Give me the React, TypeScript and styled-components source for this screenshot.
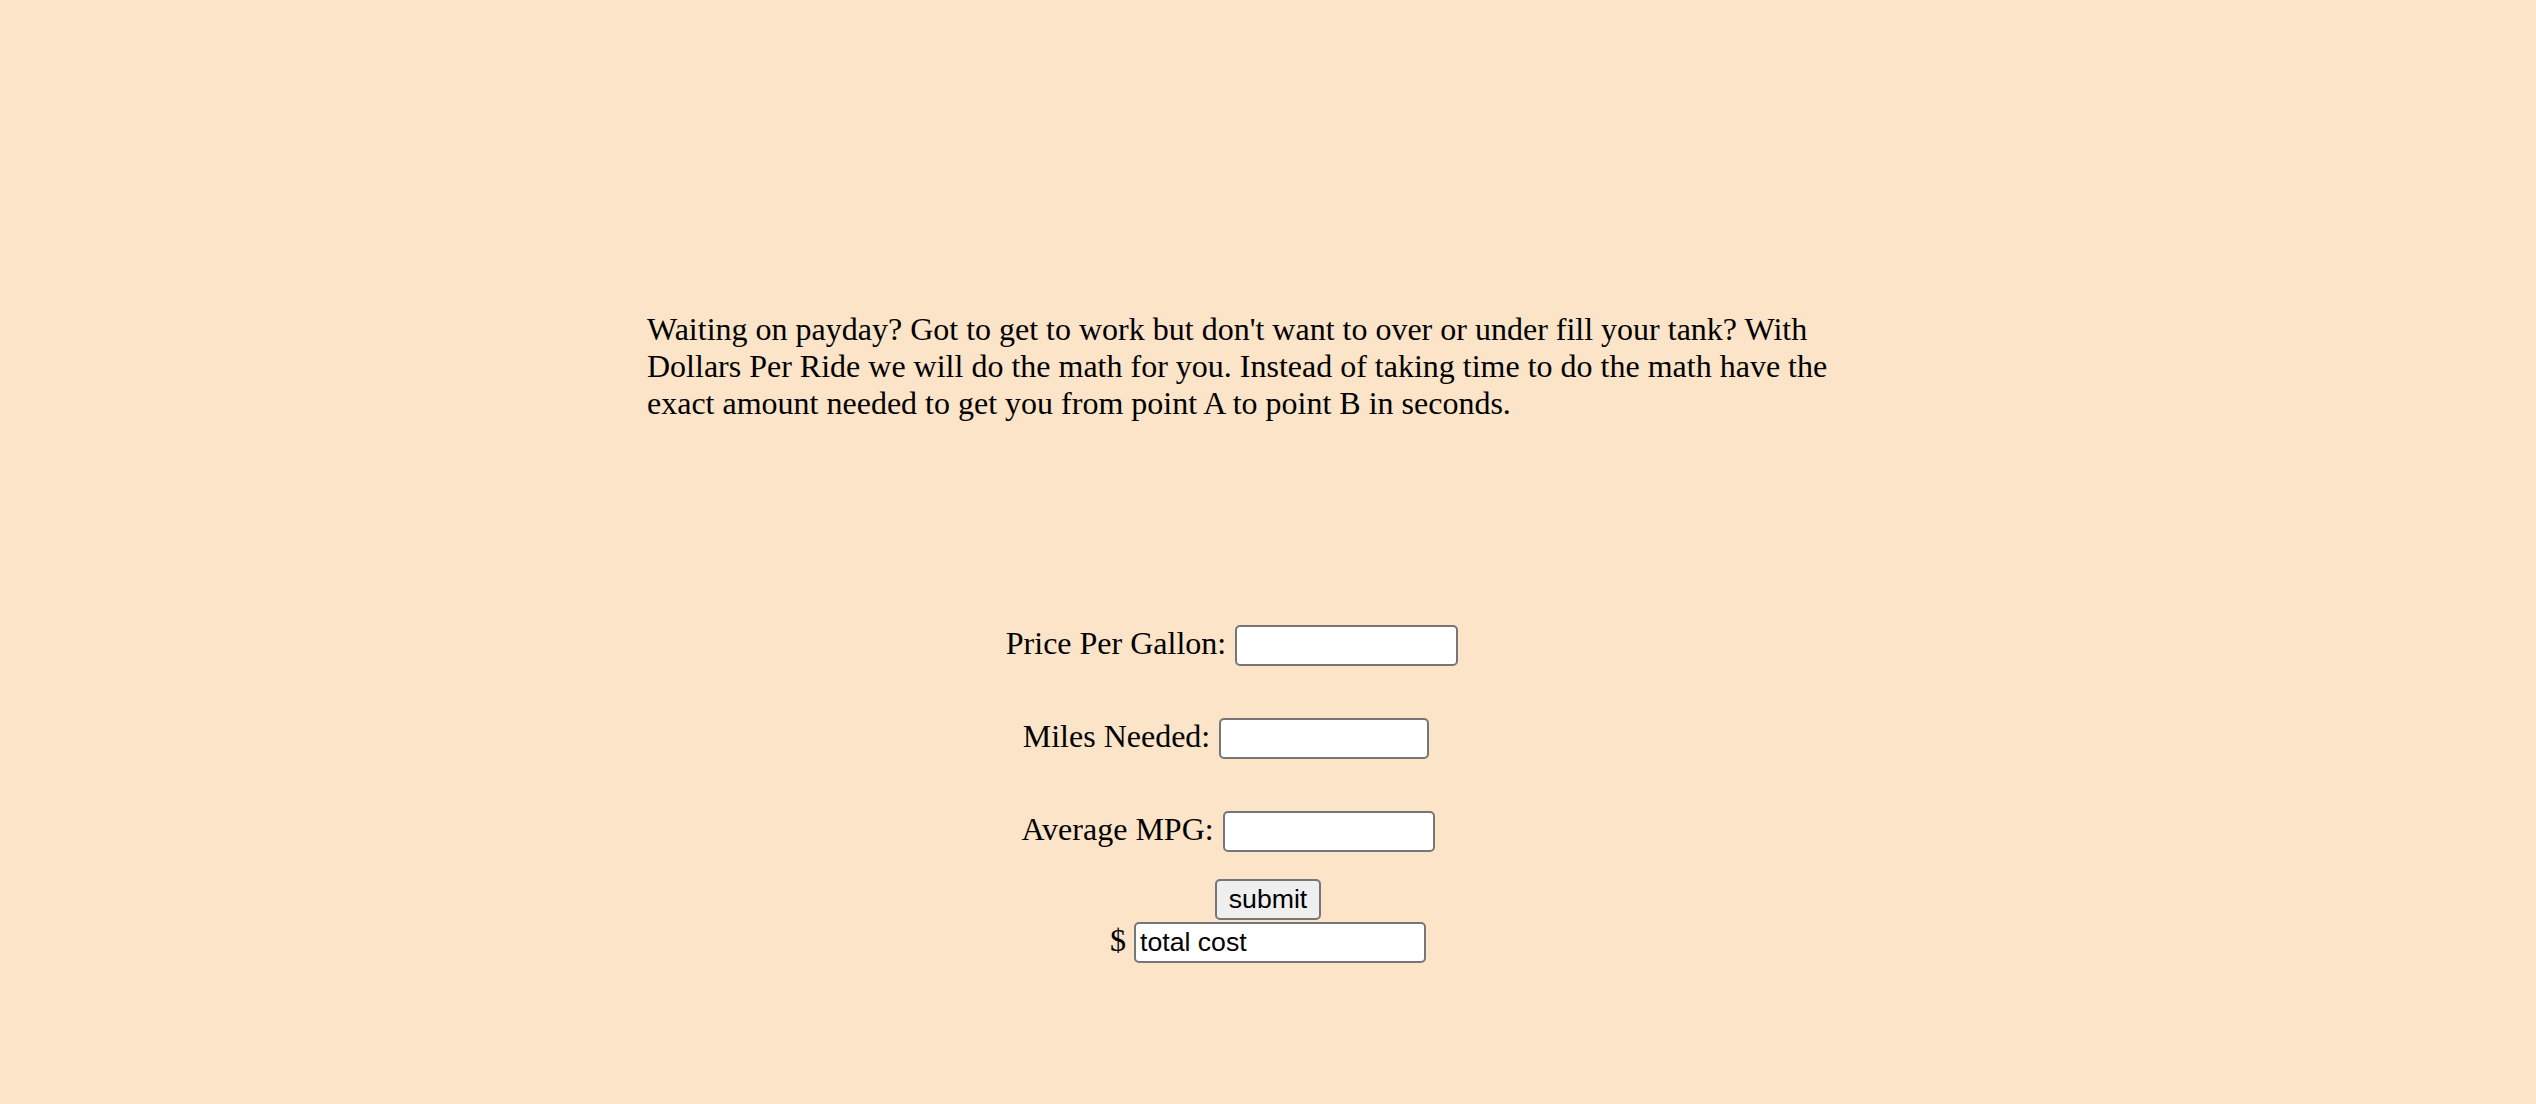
import React from "react";
import styled, { createGlobalStyle } from "styled-components";

const Global = createGlobalStyle`
  html, body {
    margin: 0;
    padding: 0;
    background: #fbe4c8;
  }
  body {
    font-family: "Liberation Serif", "Times New Roman", serif;
    font-size: 32px;
    color: #000;
  }
`;

const Page = styled.main`
  display: flex;
  flex-direction: column;
  padding: 311px 16px 0;
  min-height: 1104px;
  box-sizing: border-box;
`;

const Intro = styled.p`
  width: 1242px;
  margin: 0 auto;
  line-height: normal;
`;

const Form = styled.form`
  display: flex;
  flex-direction: column;
  margin-top: 203px;
`;

const Row = styled.div<{ $gap: number; $shift: number; $space: number }>`
  display: flex;
  justify-content: center;
  align-items: baseline;
  gap: ${(p) => p.$space}px;
  margin-top: ${(p) => p.$gap}px;
  padding-right: ${(p) => p.$shift}px;
`;

const Label = styled.label`
  white-space: nowrap;
`;

const Field = styled.input<{ $w: number }>`
  box-sizing: border-box;
  width: ${(p) => p.$w}px;
  height: 41px;
  padding: 2px 4px;
  margin: 0;
  border: 2px solid #767676;
  border-radius: 5px;
  background: #fff;
  font-family: "Liberation Sans", Arial, sans-serif;
  font-size: 26.67px;
  color: #000;
  outline: none;
`;

const Submit = styled.button`
  box-sizing: border-box;
  height: 41px;
  padding: 2px 12px;
  margin: 0;
  border: 2px solid #767676;
  border-radius: 5px;
  background: #efefef;
  font-family: "Liberation Sans", Arial, sans-serif;
  font-size: 26.67px;
  color: #000;
`;

export default function App() {
  return (
    <>
      <Global />
      <Page>
        <Intro>
          Waiting on payday? Got to get to work but don't want to over or under fill your tank? With
          Dollars Per Ride we will do the math for you. Instead of taking time to do the math have the
          exact amount needed to get you from point A to point B in seconds.
        </Intro>
        <Form onSubmit={(e) => e.preventDefault()}>
          <Row $gap={0} $shift={72} $space={9}>
            <Label htmlFor="ppg">Price Per Gallon:</Label>
            <Field id="ppg" type="text" $w={223} />
          </Row>
          <Row $gap={52} $shift={84} $space={9}>
            <Label htmlFor="miles">Miles Needed:</Label>
            <Field id="miles" type="text" $w={210} />
          </Row>
          <Row $gap={52} $shift={80} $space={9}>
            <Label htmlFor="mpg">Average MPG:</Label>
            <Field id="mpg" type="text" $w={212} />
          </Row>
          <Row $gap={27} $shift={0} $space={0}>
            <Submit type="submit">submit</Submit>
          </Row>
          <Row $gap={2} $shift={0} $space={8}>
            <Label htmlFor="total">$</Label>
            <Field id="total" type="text" $w={292} value="total cost" readOnly />
          </Row>
        </Form>
      </Page>
    </>
  );
}
